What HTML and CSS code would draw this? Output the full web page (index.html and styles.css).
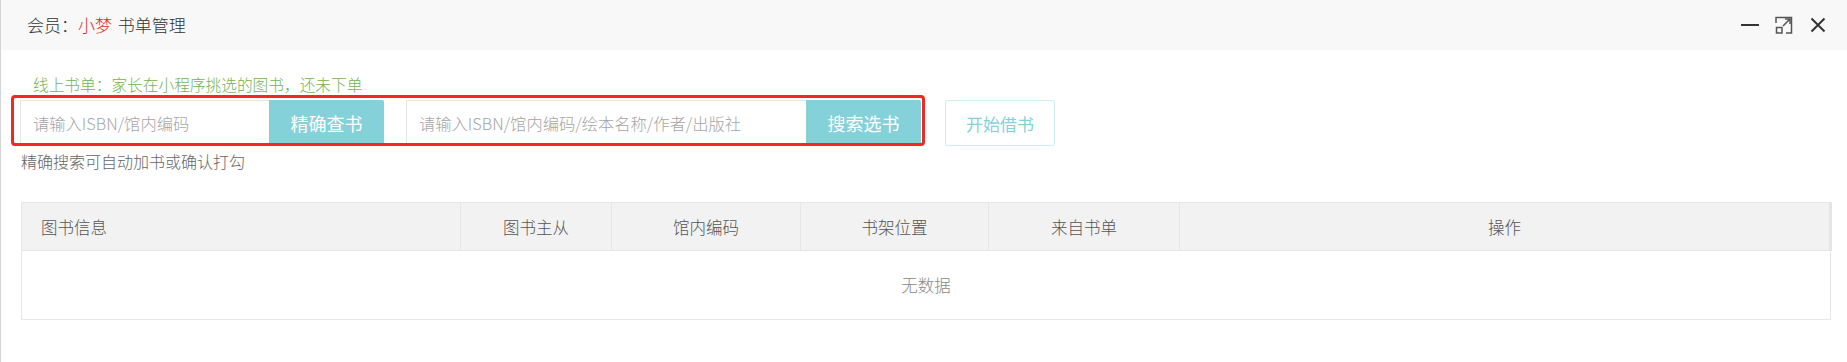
FILE: index.html
```html
<!DOCTYPE html>
<html lang="zh-CN">
<head>
<meta charset="utf-8">
<title>书单管理</title>
<link rel="stylesheet" href="styles.css">
</head>
<body>
<div class="layer">
  <div class="titlebar">
    <span class="title">会员：<em class="name">小梦</em> 书单管理</span>
    <div class="ctrls">
      <svg class="ico" width="20" height="20" viewBox="0 0 20 20"><line x1="1" y1="10" x2="19" y2="10" stroke="#333" stroke-width="2"/></svg>
      <svg class="ico" width="20" height="20" viewBox="0 0 20 20" fill="none" stroke="#555" stroke-width="1.5"><path d="M2 8V2.5h15.5V18H12"/><rect x="2.5" y="12.5" width="5.5" height="5.5"/><path d="M9 11L16 4M11 4h5v5"/></svg>
      <svg class="ico" width="20" height="20" viewBox="0 0 20 20" fill="none" stroke="#333" stroke-width="2"><path d="M3.5 3.5L16.5 16.5M16.5 3.5L3.5 16.5"/></svg>
    </div>
  </div>
  <div class="content">
    <p class="tip">线上书单：家长在小程序挑选的图书，还未下单</p>
    <div class="toolbar">
      <div class="search-group">
        <input class="field field-a" type="text" placeholder="请输入ISBN/馆内编码">
        <button class="btn-fill">精确查书</button>
        <input class="field field-b" type="text" placeholder="请输入ISBN/馆内编码/绘本名称/作者/出版社">
        <button class="btn-fill">搜索选书</button>
      </div>
      <button class="btn-outline">开始借书</button>
    </div>
    <p class="hint">精确搜索可自动加书或确认打勾</p>
    <table class="grid">
      <colgroup>
        <col class="c1"><col class="c2"><col class="c3"><col class="c4"><col class="c5"><col class="c6">
      </colgroup>
      <thead>
        <tr>
          <th class="left">图书信息</th>
          <th>图书主从</th>
          <th>馆内编码</th>
          <th>书架位置</th>
          <th>来自书单</th>
          <th class="last">操作</th>
        </tr>
      </thead>
      <tbody>
        <tr><td class="empty" colspan="6">无数据</td></tr>
      </tbody>
    </table>
  </div>
</div>
</body>
</html>
```

FILE: styles.css
```css
* { box-sizing: border-box; }
html, body { margin: 0; padding: 0; background: #fff; }
body {
  font-family: "Noto Sans CJK SC", "Microsoft YaHei", sans-serif;
  font-weight: 300;
  color: #333;
  width: 1847px;
  height: 362px;
  overflow: hidden;
}
.layer {
  height: 362px;
  border-left: 1px solid #d4d4d4;
}
.titlebar {
  height: 50px;
  background: #f8f8f8;
  display: flex;
  align-items: center;
  justify-content: space-between;
  padding: 0 19px 0 26px;
}
.title { font-size: 17px; line-height: 20px; color: #333; word-spacing: 2px; }
.name { font-style: normal; color: #e4282a; }
.ctrls { display: flex; align-items: center; gap: 14px; }
.ico { display: block; }

.content { padding: 25px 18px 0 19px; }
.tip {
  margin: 0 0 5px;
  padding-left: 13px;
  font-size: 15.7px;
  line-height: 20px;
  color: #72b353;
}
.toolbar { display: flex; align-items: flex-start; gap: 24px; }
.search-group {
  position: relative;
  display: flex;
  height: 45px;
}
.search-group::after {
  content: "";
  position: absolute;
  left: -9px; top: -5px; right: -4px; bottom: -1px;
  border: 3px solid #f02a22;
  border-radius: 4px;
  pointer-events: none;
}
.field {
  height: 45px;
  border: 1px solid #e6e6e6;
  border-right: 0;
  padding: 0 12px;
  font-family: inherit;
  font-weight: 300;
  font-size: 16.3px;
  color: #333;
  outline: none;
  background: #fff;
}
.field::placeholder { color: #a5a5a5; }
.field-a { width: 249px; }
.field-b { width: 400px; margin-left: 22px; }
.btn-fill {
  width: 115px;
  height: 45px;
  border: 0;
  background: #85d1d9;
  color: #fff;
  font-family: inherit;
  font-weight: 400;
  font-size: 18px;
  padding: 0;
  border-radius: 0 2px 2px 0;
}
.btn-outline {
  width: 110px;
  height: 46px;
  border: 1px solid #cdeef2;
  border-radius: 2px;
  background: #fff;
  color: #85d1d9;
  font-family: inherit;
  font-weight: 400;
  font-size: 17px;
  padding: 0;
}
.hint {
  margin: 5px 0 0 1px;
  font-size: 16px;
  line-height: 20px;
  color: #666;
}
.grid {
  margin: 31px 0 0 1px;
  width: 1809px;
  table-layout: fixed;
  border-collapse: collapse;
  border: 1px solid #e6e6e6;
}
.c1 { width: 439px; }
.c2 { width: 151px; }
.c3 { width: 189px; }
.c4 { width: 188px; }
.c5 { width: 191px; }
.c6 { width: 651px; }
.grid th {
  height: 48px;
  background: #f2f2f2;
  border: 1px solid #e6e6e6;
  font-weight: 300;
  font-size: 16.5px;
  color: #555;
  text-align: center;
  padding: 0;
}
.grid th.left { text-align: left; padding-left: 19px; }
.grid th.last { border-right: 3px solid #e3e6e6; }
.grid td.empty {
  height: 69px;
  text-align: center;
  font-size: 16.5px;
  color: #888;
}
```
